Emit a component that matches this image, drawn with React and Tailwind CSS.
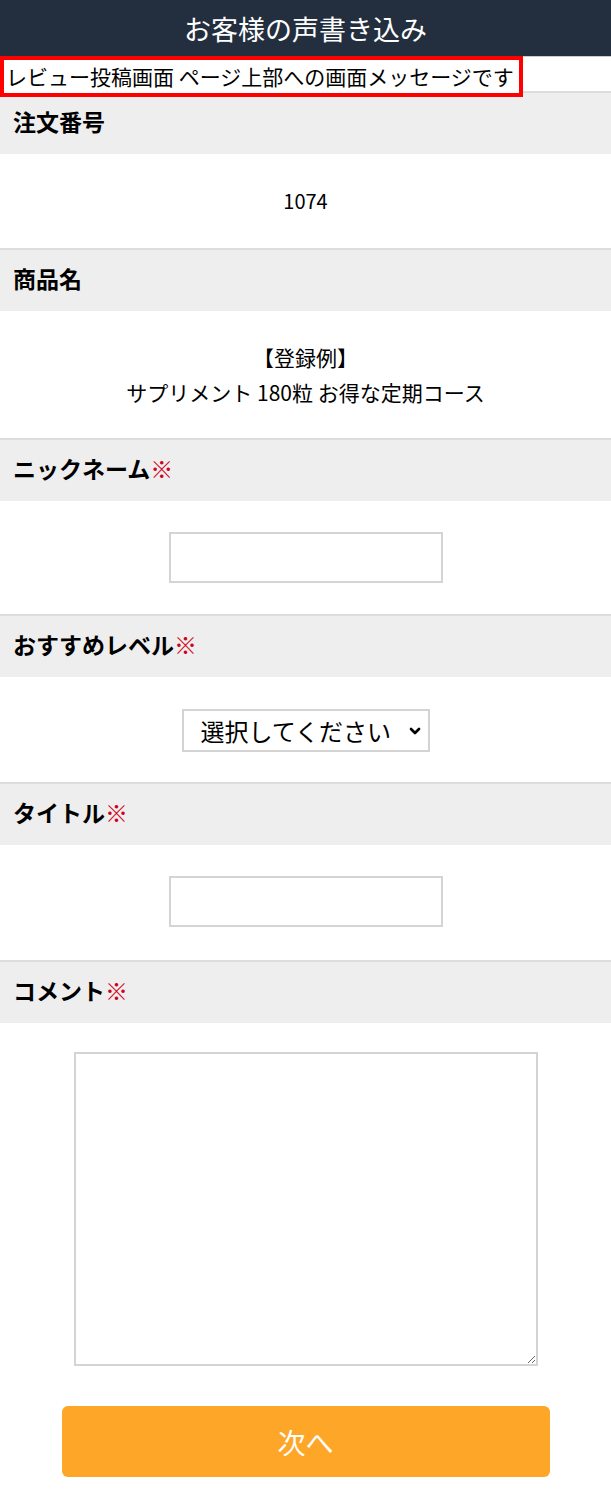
import { ChevronDown } from "lucide-react";

const font = { fontFamily: '"Noto Sans CJK JP", "Noto Sans", sans-serif' };

function SectionHead({ label, required }) {
  return (
    <div className="h-[63px] border-t-2 border-[#dddddd] bg-[#eeeeee] px-[13px] pb-[5px] flex items-center">
      <h2 className="text-[23px] font-bold text-black leading-none">
        {label}
        {required && <span className="font-black text-[#d0021b]">※</span>}
      </h2>
    </div>
  );
}

export default function App() {
  return (
    <div className="w-[611px] min-h-[1502px] bg-white text-black" style={font}>
      {/* header */}
      <div className="h-[56px] bg-[#232f3f] flex items-center justify-center">
        <h1 className="text-[27px] text-white leading-none">お客様の声書き込み</h1>
      </div>

      {/* page message */}
      <div className="h-[35px] border-t border-[#cccccc]">
        <div className="relative z-10 -mt-px inline-flex h-[41px] w-[523px] items-center border-[4px] border-[#ff0000] bg-white pl-[2px]">
          <p className="text-[21px] leading-none whitespace-nowrap">レビュー投稿画面 ページ上部への画面メッセージです</p>
        </div>
      </div>

      <SectionHead label="注文番号" />
      <div className="h-[94px] flex items-center justify-center">
        <p className="text-[20px]">1074</p>
      </div>

      <SectionHead label="商品名" />
      <div className="h-[127px] flex flex-col items-center justify-center text-[21px] leading-[35px]">
        <p>【登録例】</p>
        <p>サプリメント 180粒 お得な定期コース</p>
      </div>

      <SectionHead label="ニックネーム" required />
      <div className="h-[113px] flex items-center justify-center">
        <input type="text" className="w-[274px] h-[51px] border-2 border-[#d4d4d4] bg-white outline-none" />
      </div>

      <SectionHead label="おすすめレベル" required />
      <div className="h-[105px] flex items-center justify-center pt-[2px]">
        <div className="w-[248px] h-[43px] border-2 border-[#d4d4d4] bg-white flex items-center justify-between pl-[17px] pr-[5px]">
          <span className="text-[24px] leading-none">選択してください</span>
          <ChevronDown size={16} strokeWidth={4} />
        </div>
      </div>

      <SectionHead label="タイトル" required />
      <div className="h-[115px] flex items-start justify-center pt-[31px]">
        <input type="text" className="w-[274px] h-[51px] border-2 border-[#d4d4d4] bg-white outline-none" />
      </div>

      <SectionHead label="コメント" required />
      <div className="flex flex-col items-center pt-[29px] pb-[25px]">
        <textarea className="w-[464px] h-[314px] border-2 border-[#d4d4d4] bg-white outline-none" />
        <button className="mt-[40px] w-[488px] h-[71px] rounded-[6px] bg-[#fea628] text-white text-[28px] flex items-center justify-center">
          次へ
        </button>
      </div>
    </div>
  );
}
